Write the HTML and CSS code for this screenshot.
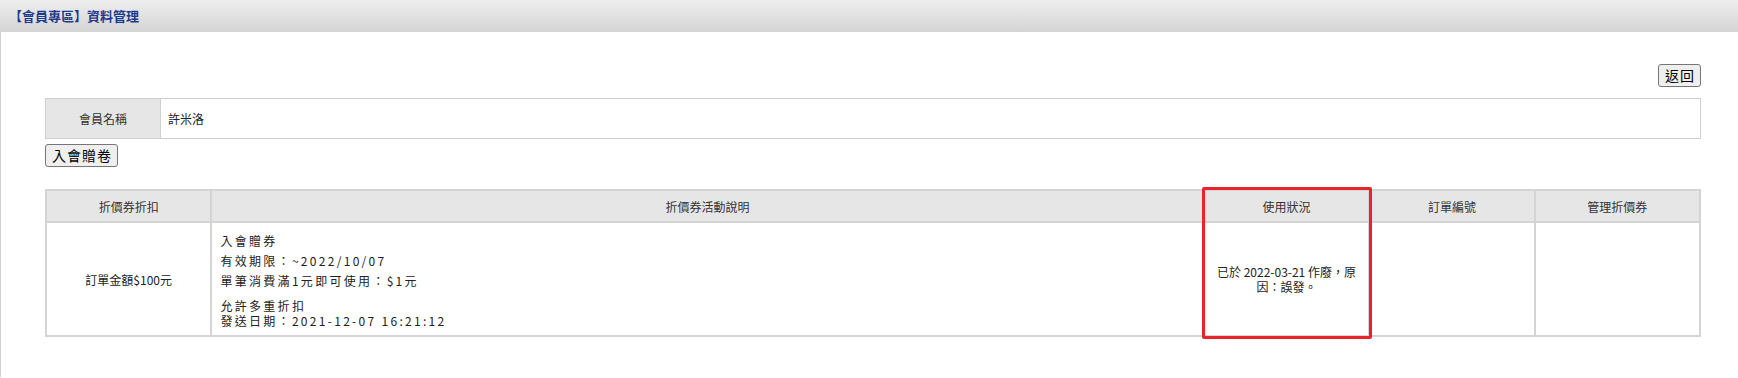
FILE: index.html
```html
<!DOCTYPE html>
<html lang="zh-Hant">
<head>
<meta charset="utf-8">
<title>資料管理</title>
<link rel="stylesheet" href="styles.css">
</head>
<body>
<div class="topbar">【會員專區】資料管理</div>
<div class="page">
  <div class="actions">
    <button class="btn" type="button">返回</button>
  </div>
  <table class="member-table">
    <tr>
      <th class="member-label">會員名稱</th>
      <td class="member-value">許米洛</td>
    </tr>
  </table>
  <div class="btn-row">
    <button class="btn" type="button">入會贈卷</button>
  </div>
  <div class="coupon-wrap">
    <table class="coupon-table">
      <colgroup>
        <col class="c-narrow">
        <col class="c-wide">
        <col class="c-narrow">
        <col class="c-narrow">
        <col class="c-narrow">
      </colgroup>
      <thead>
        <tr>
          <th>折價券折扣</th>
          <th>折價券活動說明</th>
          <th>使用狀況</th>
          <th>訂單編號</th>
          <th>管理折價券</th>
        </tr>
      </thead>
      <tbody>
        <tr>
          <td class="center">訂單金額$100元</td>
          <td class="desc">
            <div class="desc-main">
              <div>入會贈券</div>
              <div>有效期限：~2022/10/07</div>
              <div>單筆消費滿1元即可使用：$1元</div>
            </div>
            <div class="desc-sub">
              <div>允許多重折扣</div>
              <div>發送日期：2021-12-07 16:21:12</div>
            </div>
          </td>
          <td class="center status">已於 2022-03-21 作廢，原因：誤發。</td>
          <td></td>
          <td></td>
        </tr>
      </tbody>
    </table>
    <div class="highlight"></div>
  </div>
</div>
</body>
</html>
```

FILE: styles.css
```css
html, body {
  margin: 0;
  padding: 0;
  background: #ffffff;
}

body {
  font-family: "Noto Sans CJK TC", "Noto Sans", sans-serif;
  font-size: 12px;
  color: #222;
}

.topbar {
  height: 32px;
  line-height: 31px;
  padding-left: 9px;
  background: linear-gradient(to bottom, #eeeeee 0%, #d4d4d4 100%);
  color: #1d3b8c;
  font-size: 13px;
  font-weight: bold;
}

.page {
  border-left: 1px solid #d0d0d0;
  padding: 32px 37px 40px 44px;
  min-height: 274px;
  box-sizing: border-box;
}

.actions {
  display: flex;
  justify-content: flex-end;
  margin-bottom: 11px;
}

.btn {
  height: 23px;
  padding: 0 5px 0 6px;
  margin: 0;
  font-family: "Noto Sans CJK TC", sans-serif;
  font-size: 14px;
  line-height: 21px;
  letter-spacing: 1px;
  color: #000;
  background: #efefef;
  border: 1px solid #767676;
  border-radius: 3px;
}

.member-table {
  width: 100%;
  border-collapse: collapse;
  border: 1px solid #cfcfcf;
}

.member-table th,
.member-table td {
  height: 39px;
  border: 1px solid #cfcfcf;
  padding: 0;
  font-weight: normal;
}

.member-label {
  width: 114px;
  background: #e6e6e6;
  text-align: center;
  color: #333;
}

.member-value {
  padding-left: 7px !important;
  text-align: left;
}

.btn-row {
  margin-top: 5px;
}

.coupon-wrap {
  position: relative;
  margin-top: 22px;
}

.coupon-table {
  width: 100%;
  border-collapse: collapse;
  table-layout: fixed;
  border: 2px solid #d4d4d4;
}

.c-narrow { width: 10%; }
.c-wide { width: 60%; }

.coupon-table th {
  height: 30px;
  padding: 0;
  background: #e6e6e6;
  border: 2px solid #d4d4d4;
  font-weight: normal;
  color: #333;
}

.coupon-table td {
  height: 112px;
  padding: 0 8px;
  border: 2px solid #d4d4d4;
  vertical-align: middle;
}

.center {
  text-align: center;
}

.status {
  line-height: 15px;
}

.desc {
  letter-spacing: 2.3px;
  color: #222;
}

.desc-main {
  line-height: 20px;
}

.desc-sub {
  margin-top: 7px;
  line-height: 15px;
}

.highlight {
  position: absolute;
  left: 1157px;
  top: -2px;
  width: 164px;
  height: 146px;
  border: 3px solid #e8232b;
  border-radius: 2px;
  pointer-events: none;
}
```
